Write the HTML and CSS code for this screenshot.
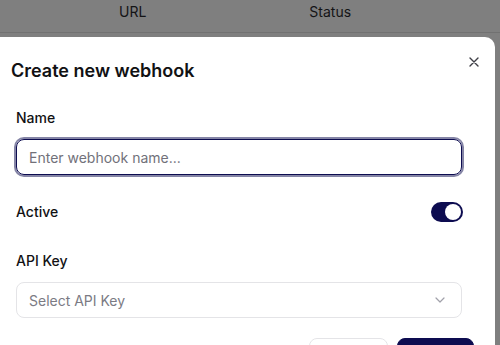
FILE: index.html
```html
<!DOCTYPE html>
<html>
<head>
<meta charset="utf-8">
<link rel="stylesheet" href="styles.css">
</head>
<body>
<div class="thead">
  <span class="th th-url">URL</span>
  <span class="th th-status">Status</span>
</div>
<div class="modal">
  <h2 class="title">Create new webhook</h2>
  <button class="close" aria-label="Close">
    <svg width="10" height="10" viewBox="0 0 10 10"><path d="M1 1L9 9M9 1L1 9" stroke="#3f3f46" stroke-width="1.4" stroke-linecap="round"/></svg>
  </button>
  <div class="form">
    <label class="label">Name</label>
    <div class="input focus"><span class="placeholder">Enter webhook name...</span></div>
    <div class="row">
      <span class="label">Active</span>
      <span class="toggle"><span class="knob"></span></span>
    </div>
    <label class="label api">API Key</label>
    <div class="input select">
      <span class="placeholder">Select API Key</span>
      <svg class="chev" width="10" height="6" viewBox="0 0 10 6"><path d="M1 1L5 5L9 1" fill="none" stroke="#a1a1aa" stroke-width="1.2" stroke-linecap="round" stroke-linejoin="round"/></svg>
    </div>
  </div>
  <div class="actions">
    <button class="btn btn-outline" aria-label="Cancel"></button>
    <button class="btn btn-primary" aria-label="Create"></button>
  </div>
</div>
</body>
</html>
```
FILE: styles.css
```css
* { box-sizing: border-box; }
html, body { margin: 0; padding: 0; }
body {
  width: 500px;
  height: 345px;
  overflow: hidden;
  background: #7f7f7f;
  font-family: Inter, "Noto Sans", sans-serif;
  color: #111113;
}
.thead {
  height: 33px;
  border-bottom: 1px solid #717171;
  display: flex;
  padding-top: 2px;
  font-size: 14px;
  line-height: 20px;
  color: #141416;
}
.th-url { margin-left: 119px; }
.th-status { margin-left: 163px; }
.modal {
  margin-top: 4px;
  width: 495px;
  height: 308px;
  overflow: hidden;
  background: #fff;
  border-top-right-radius: 10px;
  position: relative;
  padding-top: 20px;
}
.title {
  margin: 0;
  padding-left: 11px;
  font-size: 18px;
  line-height: 28px;
  font-weight: 600;
  color: #111113;
}
.close {
  position: absolute;
  top: 20px;
  right: 16px;
  width: 10px;
  height: 10px;
  padding: 0;
  border: 0;
  background: none;
  display: block;
}
.close svg { display: block; }
.form {
  padding: 0 33px 0 16px;
  margin-top: 23px;
}
.label {
  display: block;
  font-size: 14px;
  line-height: 20px;
  font-weight: 500;
  color: #111113;
}
.input {
  margin-top: 11px;
  height: 36px;
  border: 1px solid #e4e4e7;
  border-radius: 8px;
  display: flex;
  align-items: center;
  padding: 0 12px;
  font-size: 14px;
}
.input.focus {
  border-color: #0d0c50;
  box-shadow: 0 0 0 2px #8585a6;
}
.placeholder { color: #71717a; }
.select .placeholder { color: #7b7b84; }
.row {
  margin-top: 27px;
  height: 20px;
  display: flex;
  align-items: center;
  justify-content: space-between;
}
.toggle {
  width: 32px;
  height: 20px;
  border-radius: 10px;
  background: #0d0c50;
  position: relative;
  margin-right: -1px;
}
.knob {
  position: absolute;
  top: 2px;
  right: 2px;
  width: 16px;
  height: 16px;
  border-radius: 50%;
  background: #fff;
}
.label.api { margin-top: 29px; }
.select { justify-content: space-between; padding-right: 16px; }
.chev { display: block; }
.actions {
  margin-top: 20px;
  padding-right: 21px;
  display: flex;
  justify-content: flex-end;
  gap: 9px;
}
.btn {
  height: 36px;
  border-radius: 8px;
  padding: 0;
}
.btn-outline {
  width: 79px;
  background: #fff;
  border: 1px solid #e4e4e7;
}
.btn-primary {
  width: 77px;
  background: #0d0c50;
  border: 1px solid #0d0c50;
}
```
